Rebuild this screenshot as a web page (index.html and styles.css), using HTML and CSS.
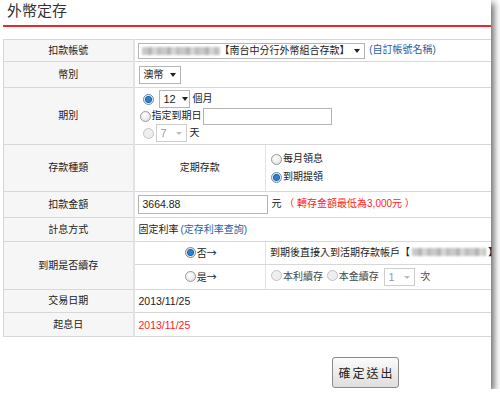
FILE: index.html
```html
<!DOCTYPE html>
<html lang="zh-Hant">
<head>
<meta charset="UTF-8">
<title>外幣定存</title>
<link rel="stylesheet" href="styles.css">
</head>
<body>
<div class="page">
  <h1 class="title">外幣定存</h1>

  <table class="form">
    <colgroup>
      <col class="c-label">
      <col class="c-mid">
      <col class="c-rest">
    </colgroup>
    <tr class="r1">
      <th>扣款帳號</th>
      <td colspan="2">
        <div class="select wide"><span class="blur acct"></span>【南台中分行外幣組合存款】<span class="arrow"></span></div>
        <a class="link">(自訂帳號名稱)</a>
      </td>
    </tr>
    <tr class="r2">
      <th>幣別</th>
      <td colspan="2"><div class="select cur">澳幣<span class="arrow"></span></div></td>
    </tr>
    <tr class="r3">
      <th>期別</th>
      <td colspan="2">
        <div class="line"><span class="radio on"></span><div class="select num">12<span class="arrow"></span></div>個月</div>
        <div class="line"><span class="radio"></span>指定到期日<span class="input date"></span></div>
        <div class="line"><span class="radio off"></span><div class="select num off">7<span class="arrow"></span></div>天</div>
      </td>
    </tr>
    <tr class="r4">
      <th>存款種類</th>
      <td class="mid">定期存款</td>
      <td>
        <div class="line"><span class="radio"></span>每月領息</div>
        <div class="line"><span class="radio on"></span>到期提領</div>
      </td>
    </tr>
    <tr class="r5">
      <th>扣款金額</th>
      <td colspan="2"><span class="input amount">3664.88</span>元 <span class="note">（ 轉存金額最低為3,000元 ）</span></td>
    </tr>
    <tr class="r6">
      <th>計息方式</th>
      <td colspan="2">固定利率<a class="link">(定存利率查詢)</a></td>
    </tr>
    <tr class="r7">
      <th rowspan="2">到期是否續存</th>
      <td class="mid"><span class="radio on"></span>否<span class="arr">→</span></td>
      <td>到期後直接入到活期存款帳戶【<span class="blur acct2"></span>】</td>
    </tr>
    <tr class="r7b">
      <td class="mid"><span class="radio"></span>是<span class="arr">→</span></td>
      <td class="dim"><span class="radio off"></span>本利續存 <span class="radio off"></span>本金續存 <div class="select num off">1<span class="arrow"></span></div> 次</td>
    </tr>
    <tr class="r8">
      <th>交易日期</th>
      <td colspan="2" class="date-text">2013/11/25</td>
    </tr>
    <tr class="r9">
      <th>起息日</th>
      <td colspan="2" class="date-text red">2013/11/25</td>
    </tr>
  </table>

  <div class="actions">
    <button class="submit">確定送出</button>
  </div>
</div>
</body>
</html>
```

FILE: styles.css
```css
body {
  margin: 0;
  background: #fff;
  font-family: "Liberation Sans", "Noto Sans CJK TC", sans-serif;
  font-size: 10px;
  color: #222;
}

.page {
  width: 488px;
  height: 389px;
  padding-left: 3px;
  background: #fff;
  box-shadow: 3px 3px 7px rgba(0, 0, 0, 0.6);
}

.title {
  margin: 0;
  height: 27px;
  padding: 2px 0 0 4px;
  box-sizing: border-box;
  font-size: 15px;
  font-weight: normal;
  line-height: 18px;
  color: #333;
  border-bottom: 2px solid #e8282a;
}

.form {
  width: 488px;
  margin-top: 12px;
  border-collapse: collapse;
  table-layout: fixed;
}

.c-label { width: 130px; }
.c-mid { width: 132px; }

.form th,
.form td {
  border-top: 1px solid #d8d8d8;
  border-bottom: 1px solid #d8d8d8;
  padding: 0 0 0 4px;
  white-space: nowrap;
  line-height: 14px;
}

.form th {
  background: #f6f6f6;
  font-weight: normal;
  text-align: center;
  padding: 0;
  border-left: 1px solid #d8d8d8;
  border-right: 2px solid #e2e2e2;
}

.form td.mid {
  text-align: center;
  border-right: 1px solid #e2e2e2;
  padding: 0;
}

.r1 { height: 22px; }
.r2 { height: 26px; }
.r3 { height: 57px; }
.r4 { height: 47px; }
.r5 { height: 26px; }
.r6 { height: 24px; }
.r7 { height: 23px; }
.r7b { height: 25px; }
.r8 { height: 23px; }
.r9 { height: 24px; }

.line {
  display: flex;
  align-items: center;
  height: 18px;
}

.r3 .line { height: 17px; }

.select {
  display: inline-flex;
  align-items: center;
  height: 16px;
  padding: 0 4px;
  border: 1px solid #b4b4b4;
  background: #fff;
  vertical-align: middle;
  gap: 6px;
  box-sizing: border-box;
}

.select .arrow {
  width: 0;
  height: 0;
  border-left: 3px solid transparent;
  border-right: 3px solid transparent;
  border-top: 4px solid #222;
  margin-left: auto;
}

.select.wide { width: 227px; margin-left: -1px; padding-left: 3px; gap: 0; }
.select.cur { width: 42px; height: 18px; }
.select.num { width: 31px; height: 18px; margin: 0 3px 0 2px; font-size: 11px; }
.select.off { color: #999; border-color: #ccc; }
.select.off .arrow { border-top-color: #bbb; border-top-width: 3px; }

.blur {
  display: inline-block;
  height: 8px;
  background: repeating-linear-gradient(90deg, #c9c9c9 0 6px, #b3b3b3 6px 10px, #d5d5d5 10px 15px, #bdbdbd 15px 19px);
  filter: blur(1px);
}

.acct { width: 78px; }
.acct2 { width: 74px; margin: 0 2px; }

.link {
  color: #2760a8;
  margin-left: 2px;
}

.arr {
  font-family: "Noto Sans CJK TC", sans-serif;
  font-size: 10px;
  letter-spacing: -1px;
}

.radio {
  display: inline-block;
  width: 9px;
  height: 9px;
  border: 1px solid #9a9a9a;
  border-radius: 50%;
  background: radial-gradient(circle at 40% 35%, #fff, #dcdcdc);
  margin: 0 1px 0 1px;
  vertical-align: -1px;
  box-sizing: content-box;
}

.radio.on {
  background: radial-gradient(circle, #2c7fd0 0 2.5px, #1b5e9e 3px, #e8e8e8 4px);
  border-color: #6a8eb0;
}

.radio.off {
  border-color: #c4c4c4;
  background: #eee;
}

.line .radio { margin-right: 1px; }
.r3 .line:first-child .radio { margin: 0 3px 0 4px; }
.r3 .line:last-child .radio { margin: 0 0 0 4px; }

.input {
  display: inline-block;
  height: 17px;
  border: 1px solid #b4b4b4;
  background: #fff;
  vertical-align: middle;
  line-height: 17px;
  box-sizing: border-box;
}

.input.date { width: 129px; margin-left: 1px; }
.input.amount { width: 130px; padding-left: 4px; margin: 0 4px 0 -1px; font-size: 10.5px; line-height: 17px; height: 19px; }

.date-text { font-size: 10.5px; }
.note { color: #f22; }
.red { color: #f22; }
.dim { color: #444; }

.actions {
  padding: 20px 0 0 329px;
}

.submit {
  width: 67px;
  height: 31px;
  font-family: "Liberation Sans", "Noto Sans CJK TC", sans-serif;
  font-size: 12px;
  letter-spacing: 2px;
  color: #222;
  border: 1px solid #8a8a8a;
  border-radius: 3px;
  background: linear-gradient(#fbfbfb, #dedede);
  padding: 0 0 0 2px;
}
```
